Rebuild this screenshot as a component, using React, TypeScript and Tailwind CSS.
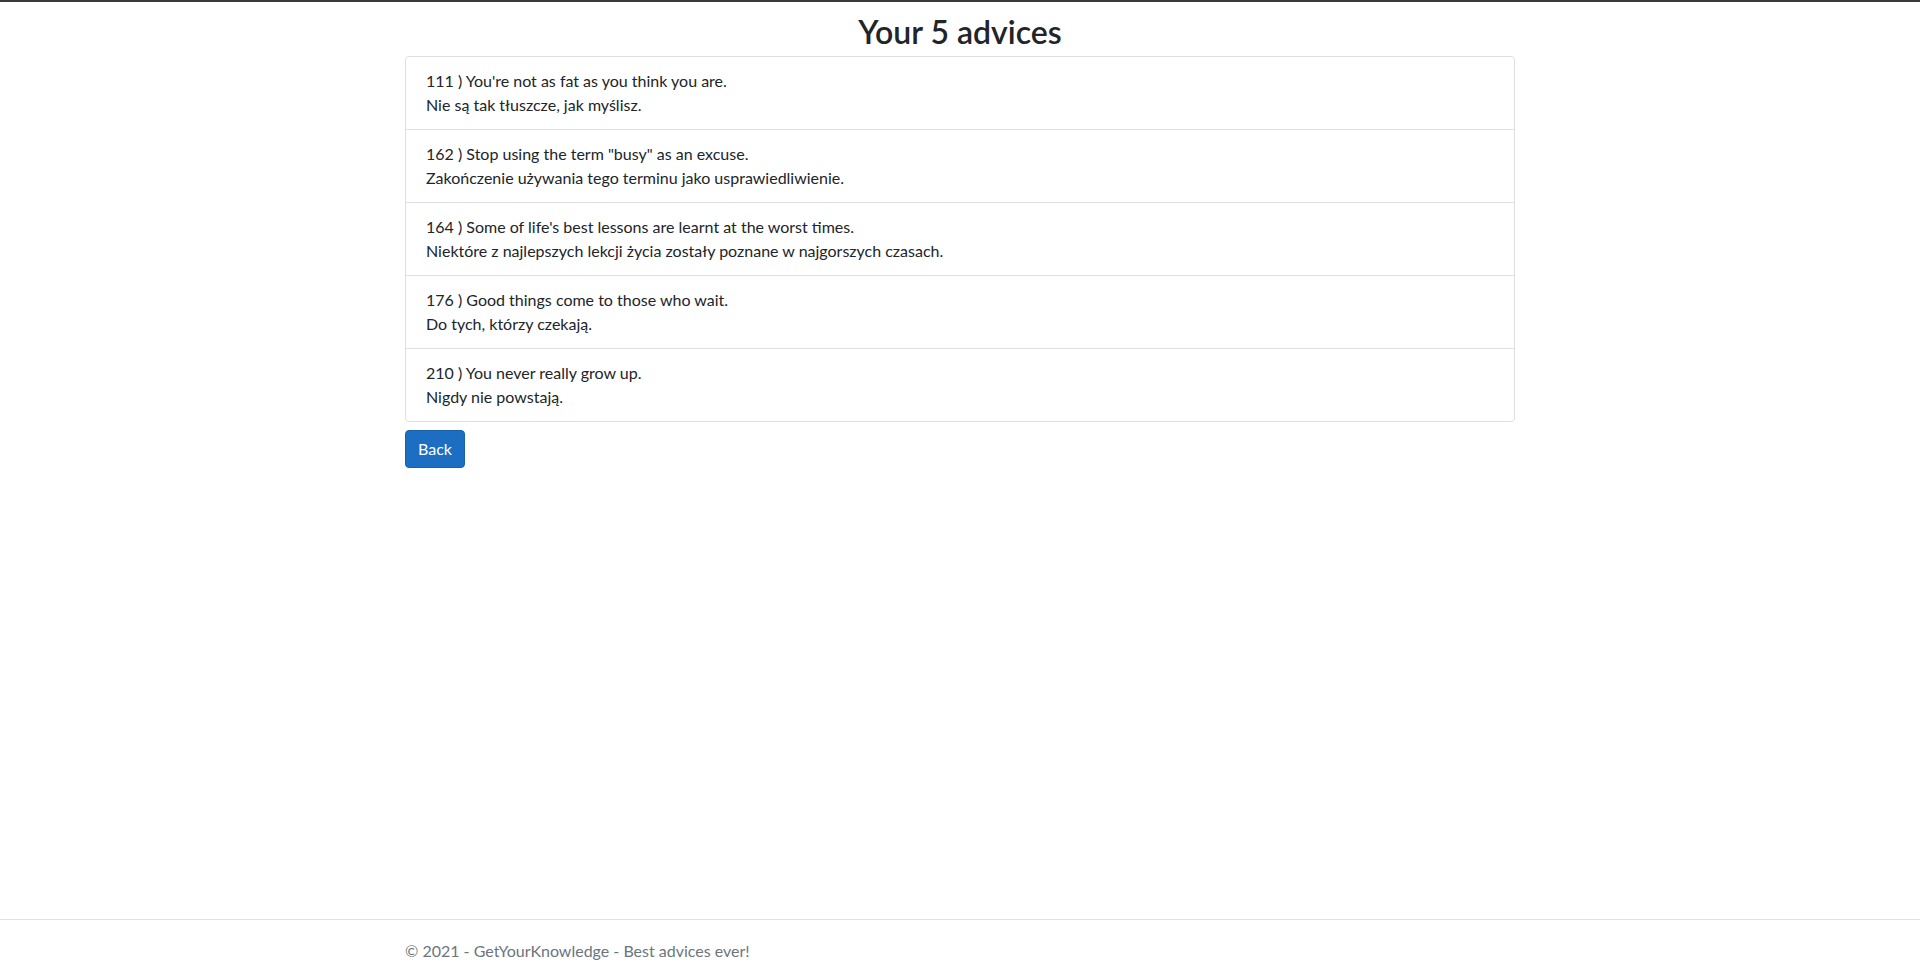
import React from 'react';

const advices = [
  { id: 111, en: "You're not as fat as you think you are.", pl: 'Nie są tak tłuszcze, jak myślisz.' },
  { id: 162, en: 'Stop using the term "busy" as an excuse.', pl: 'Zakończenie używania tego terminu jako usprawiedliwienie.' },
  { id: 164, en: "Some of life's best lessons are learnt at the worst times.", pl: 'Niektóre z najlepszych lekcji życia zostały poznane w najgorszych czasach.' },
  { id: 176, en: 'Good things come to those who wait.', pl: 'Do tych, którzy czekają.' },
  { id: 210, en: 'You never really grow up.', pl: 'Nigdy nie powstają.' },
];

export default function App() {
  return (
    <div className="min-h-screen flex flex-col bg-white text-[#212529] text-[16px] leading-[1.5] font-['Lato','Open_Sans',sans-serif]">
      {/* top rule */}
      <div className="h-[2px] bg-[#3a3a3a]"></div>

      <main className="flex-1 w-[1110px] mx-auto pt-[11px]">
        <h2 className="text-center text-[32px] leading-[1.2] font-semibold mb-[5px]">Your 5 advices</h2>

        <ul className="border border-[#dfdfdf] rounded-[4px]">
          {advices.map((a, i) => (
            <li key={a.id} className={`px-[20px] py-[12px] ${i > 0 ? 'border-t border-[#dfdfdf]' : ''}`}>
              <div>{a.id} ) {a.en}</div>
              <div>{a.pl}</div>
            </li>
          ))}
        </ul>

        <button className="mt-[8px] px-[12px] py-[6px] bg-[#1b6ec2] border border-[#1861ac] text-white rounded-[4px] leading-[1.5]">
          Back
        </button>
      </main>

      <footer className="border-t border-[#dee2e6] pt-[4px] leading-[54px] text-[#6c757d] whitespace-nowrap">
        <div className="w-[1110px] mx-auto">&copy; 2021 - GetYourKnowledge - Best advices ever!</div>
      </footer>
    </div>
  );
}
